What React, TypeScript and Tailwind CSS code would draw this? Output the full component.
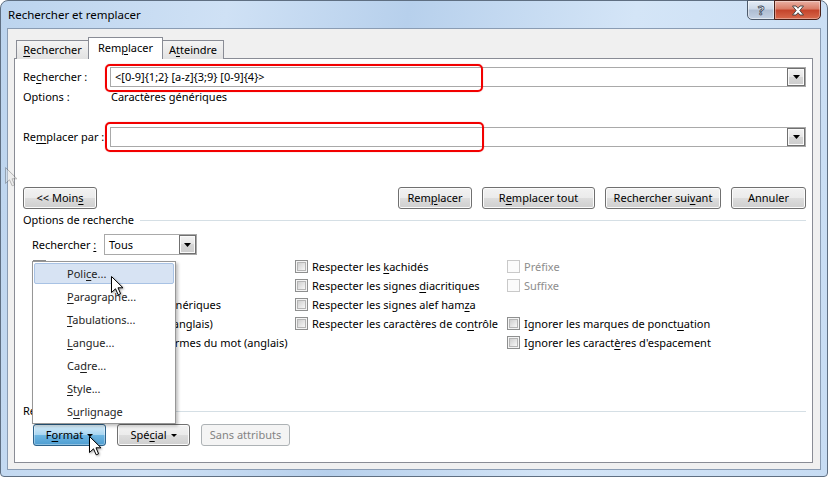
import React from "react";

const K = ({ children }: { children: React.ReactNode }) => (
  <span className="underline decoration-1 underline-offset-[2px]">{children}</span>
);

const btnNormal =
  "border border-[#707070] rounded-[3px] bg-[linear-gradient(to_bottom,#f2f2f2_0%,#ebebeb_50%,#dddddd_50%,#cfcfcf_100%)] shadow-[inset_0_0_0_1px_#fbfbfb]";

function Btn({ children, w }: { children: React.ReactNode; w: string }) {
  return (
    <div className={`${btnNormal} ${w} h-[22px] flex items-center justify-center text-black`}>{children}</div>
  );
}

function DropArrow() {
  return (
    <svg width="7" height="4" viewBox="0 0 7 4">
      <path d="M0 0H7L3.5 4Z" fill="#000" />
    </svg>
  );
}

function ComboBtn({ cls }: { cls: string }) {
  return (
    <div
      className={`${cls} border border-[#707070] bg-[linear-gradient(to_bottom,#f3f3f3_0%,#e6e6e6_50%,#d6d6d6_50%,#cdcdcd_100%)] shadow-[inset_0_0_0_1px_#fafafa] flex items-center justify-center`}
    >
      <DropArrow />
    </div>
  );
}

function Cb({ disabled }: { disabled?: boolean }) {
  return disabled ? (
    <span className="w-[13px] h-[13px] shrink-0 border border-[#c9c9c9] bg-[#fbfbfb]" />
  ) : (
    <span className="w-[13px] h-[13px] shrink-0 border border-[#8e8f8f] bg-[#f4f4f4] p-[1px] flex">
      <span className="flex-1 border border-[#b5b5b5] bg-[linear-gradient(135deg,#cfcfcf,#f7f7f7)]" />
    </span>
  );
}

function Row({ children, disabled, empty }: { children?: React.ReactNode; disabled?: boolean; empty?: boolean }) {
  if (empty) return <div className="h-[19px]" />;
  return (
    <div className="h-[19px] flex items-center gap-[4px] whitespace-nowrap">
      <Cb disabled={disabled} />
      <span className={disabled ? "text-[#8d8d8d]" : "text-black"}>{children}</span>
    </div>
  );
}

function Cursor({ x, y, ghost }: { x: number; y: number; ghost?: boolean }) {
  return (
    <svg
      width="13"
      height="21"
      viewBox="0 0 13 21"
      className={`absolute ${ghost ? "opacity-40" : "drop-shadow-[1px_1px_1px_rgba(0,0,0,0.35)]"}`}
      style={{ left: x - 0.5, top: y - 0.5 }}
    >
      <path
        d="M0.5 0.5 L0.5 16.5 L4.5 12.8 L7.2 18.8 L9.6 17.8 L7 11.8 L12 11.8 Z"
        fill={ghost ? "#e8e8e8" : "#fff"}
        stroke={ghost ? "#555" : "#000"}
        strokeWidth="1"
        strokeLinejoin="miter"
      />
    </svg>
  );
}

export default function App() {
  return (
    <div className="relative w-[828px] h-[477px] bg-white overflow-hidden font-['Noto_Sans',sans-serif] text-[11px] leading-[16px] text-black">
      {/* window frame */}
      <div className="w-[828px] h-[477px] flex flex-col border border-[#5f6f82] rounded-t-[8px] rounded-b-[4px] bg-[linear-gradient(100deg,#bcd4ee_0%,#cfe1f5_25%,#b7d0ec_45%,#d4e5f7_70%,#c7dcf3_100%)]">
        {/* title bar */}
        <div className="h-[27px] flex shrink-0">
          <div className="pl-[7px] self-center text-[11.5px] text-black">Rechercher et remplacer</div>
          <div className="ml-auto mr-[6px] flex -mt-px h-[20px]">
            <div className="w-[28px] h-[20px] border border-[#4d5a6b] rounded-bl-[5px] bg-[linear-gradient(to_bottom,#e4ecf6_0%,#ccd8e7_45%,#aebdd2_50%,#c3d1e3_100%)] flex items-center justify-center shadow-[inset_0_0_0_1px_rgba(255,255,255,0.5)]">
              <span className="text-[13px] font-bold text-white leading-none [-webkit-text-stroke:0.8px_#3a4656]">?</span>
            </div>
            <div className="w-[47px] h-[20px] -ml-px border border-[#4a2018] rounded-br-[5px] bg-[linear-gradient(to_bottom,#eab1a4_0%,#d97b65_45%,#c4432a_50%,#d8694c_100%)] flex items-center justify-center shadow-[inset_0_0_0_1px_rgba(255,255,255,0.35)]">
              <svg width="14" height="11" viewBox="0 0 14 11">
                <path
                  d="M1.5 1 H5 L7 3.3 L9 1 H12.5 L8.8 5.5 L12.5 10 H9 L7 7.7 L5 10 H1.5 L5.2 5.5 Z"
                  fill="#fff"
                  stroke="#3d3d3d"
                  strokeWidth="0.9"
                />
              </svg>
            </div>
          </div>
        </div>

        {/* client area */}
        <div className="flex-1 ml-[6px] mr-[6px] mb-[6px] border border-[#8a9cb3] bg-[#f0f0f0] flex flex-col">
          {/* tabs */}
          <div className="ml-[8px] mt-[8px] h-[22px] flex items-end relative z-10 -mb-px">
            <div className="w-[73px] h-[19px] border border-b-0 border-[#898c95] bg-[linear-gradient(to_bottom,#f4f4f4,#e2e2e2)] flex items-center justify-center">
              <span><K>R</K>echercher</span>
            </div>
            <div className="w-[75px] h-[22px] -ml-px border border-b-0 border-[#898c95] bg-white flex items-start pt-[2px] justify-center">
              <span>Rem<K>p</K>lacer</span>
            </div>
            <div className="w-[62px] h-[19px] -ml-px border border-b-0 border-[#898c95] bg-[linear-gradient(to_bottom,#f4f4f4,#e2e2e2)] flex items-center justify-center">
              <span>A<K>t</K>teindre</span>
            </div>
          </div>

          {/* panel */}
          <div className="flex-1 ml-[6px] mr-[7px] mb-[6px] border border-[#898c95] bg-white flex flex-col pl-[8px] pr-[6px]">
            {/* Rechercher row */}
            <div className="mt-[8px] h-[20px] flex items-center">
              <div className="w-[87px]">Re<K>c</K>hercher :</div>
              <div className="flex-1 h-[20px] border border-[#a9a9a9] flex items-center pl-[4px]">
                <span className="flex-1">&lt;[0-9]{"{1;2}"} [a-z]{"{3;9}"} [0-9]{"{4}"}&gt;</span>
                <ComboBtn cls="w-[18px] h-[18px]" />
              </div>
            </div>
            <div className="mt-[2px] h-[16px] flex items-center">
              <div className="w-[88px]">Options :</div>
              <div>Caractères génériques</div>
            </div>
            {/* Remplacer row */}
            <div className="mt-[22px] h-[20px] flex items-center">
              <div className="w-[87px]">Re<K>m</K>placer par :</div>
              <div className="flex-1 h-[20px] border border-[#a9a9a9] flex items-center pl-[4px]">
                <span className="flex-1" />
                <ComboBtn cls="w-[18px] h-[18px]" />
              </div>
            </div>

            {/* buttons row */}
            <div className="mt-[40px] h-[22px] flex items-center">
              <Btn w="w-[74px]">&lt;&lt; Moin<K>s</K></Btn>
              <div className="ml-auto flex gap-[10px]">
                <Btn w="w-[74px]">Rem<K>p</K>lacer</Btn>
                <Btn w="w-[113px]">R<K>e</K>mplacer tout</Btn>
                <Btn w="w-[116px]">Rechercher sui<K>v</K>ant</Btn>
                <Btn w="w-[75px]">Annuler</Btn>
              </div>
            </div>

            {/* options de recherche */}
            <div className="mt-[3px] h-[16px] flex items-center">
              <span>Options de recherche</span>
              <div className="flex-1 ml-[6px] h-px bg-[#d5dfe5]" />
            </div>
            <div className="mt-[6px] h-[21px] flex items-center pl-[9px]">
              <div className="w-[72px]">Rechercher <K>:</K></div>
              <div className="w-[93px] h-[21px] border border-[#a9a9a9] flex items-center pl-[4px]">
                <span className="flex-1">Tous</span>
                <ComboBtn cls="w-[17px] h-[19px]" />
              </div>
            </div>

            {/* checkbox grid */}
            <div className="mt-[2px] flex pl-[10px]">
              <div className="w-[262px] flex flex-col">
                <Row>Respecter la casse</Row>
                <Row>Mot entier</Row>
                <Row>Utiliser les caractères génériques</Row>
                <Row>Recherche phonétique (anglais)</Row>
                <Row>Rechercher toutes les formes du mot (anglais)</Row>
              </div>
              <div className="w-[212px] flex flex-col">
                <Row>Respecter les <K>k</K>achidés</Row>
                <Row>Respecter les signes <K>d</K>iacritiques</Row>
                <Row>Respecter les signes alef ham<K>z</K>a</Row>
                <Row>Respecter les caractères de co<K>n</K>trôle</Row>
                <Row empty />
              </div>
              <div className="flex-1 flex flex-col">
                <Row disabled>Préfixe</Row>
                <Row disabled>Suffixe</Row>
                <Row empty />
                <Row>Ignorer les marques de ponct<K>u</K>ation</Row>
                <Row>Ignorer les caract<K>è</K>res d'espacement</Row>
              </div>
            </div>

            {/* Remplacer group */}
            <div className="mt-[51px] h-[16px] flex items-center">
              <span>Remplacer</span>
              <div className="flex-1 ml-[6px] h-px bg-[#d5dfe5]" />
            </div>
            <div className="mt-[5px] h-[22px] flex items-center pl-[10px] gap-[11px]">
              <div className="w-[73px] h-[22px] border border-[#2c628b] rounded-[3px] bg-[linear-gradient(to_bottom,#d6ecf9_0%,#a9d6f1_48%,#6db6e2_52%,#4e9dd1_100%)] shadow-[inset_0_0_0_1px_rgba(255,255,255,0.35)] flex items-center justify-center gap-[4px]">
                <span>F<K>o</K>rmat</span>
                <svg width="6" height="3" viewBox="0 0 6 3"><path d="M0 0H6L3 3Z" fill="#000" /></svg>
              </div>
              <div className={`${btnNormal} w-[73px] h-[22px] flex items-center justify-center gap-[4px]`}>
                <span>Spé<K>c</K>ial</span>
                <svg width="6" height="3" viewBox="0 0 6 3"><path d="M0 0H6L3 3Z" fill="#000" /></svg>
              </div>
              <div className="w-[89px] h-[22px] border border-[#adb2b5] rounded-[3px] bg-[#f4f4f4] text-[#838383] flex items-center justify-center">
                Sans attributs
              </div>
            </div>
          </div>
        </div>
      </div>

      {/* red annotation boxes */}
      <div className="absolute left-[105px] top-[64px] w-[378px] h-[28px] border-2 border-[#f20000] rounded-[5px] shadow-[0_0_1px_rgba(200,0,0,0.6)]" />
      <div className="absolute left-[105px] top-[122px] w-[379px] h-[30px] border-2 border-[#f20000] rounded-[5px] shadow-[0_0_1px_rgba(200,0,0,0.6)]" />

      {/* format menu */}
      <div className="absolute left-[32px] top-[261px] w-[144px] h-[163px] border border-[#979797] bg-white shadow-[2px_2px_3px_rgba(0,0,0,0.25)] flex flex-col px-[1px] text-[#1e1e1e]">
        <div className="h-[23px] py-[1px]">
          <div className="h-[21px] border border-[#a8c2e4] rounded-[2px] bg-[#d7e3f3] flex items-center pl-[32px]">
            <span>Poli<K>c</K>e...</span>
          </div>
        </div>
        {[
          <><K>P</K>aragraphe...</>,
          <><K>T</K>abulations...</>,
          <><K>L</K>angue...</>,
          <>Ca<K>d</K>re...</>,
          <><K>S</K>tyle...</>,
          <>S<K>u</K>rlignage</>,
        ].map((c, i) => (
          <div key={i} className="h-[23px] flex items-center pl-[33px]">
            <span>{c}</span>
          </div>
        ))}
      </div>

      {/* cursors */}
      <Cursor x={5} y={167} ghost />
      <Cursor x={111} y={276} />
      <Cursor x={89} y={436} />
    </div>
  );
}
